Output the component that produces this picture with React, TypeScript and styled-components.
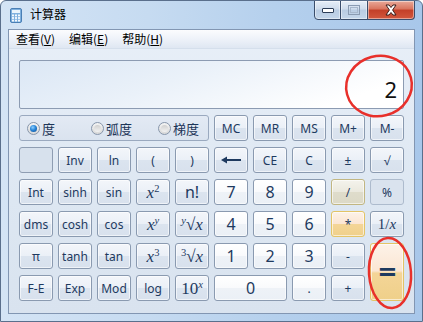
import React from "react";
import styled, { createGlobalStyle, css } from "styled-components";

const GlobalStyle = createGlobalStyle`
  html, body {
    margin: 0;
    padding: 0;
    overflow: hidden;
    background: #ffffff;
  }
  * {
    box-sizing: border-box;
  }
`;

const UI_FONT = `"Noto Sans", "Open Sans", "Noto Sans CJK SC", sans-serif`;
const CJK_FONT = `"Noto Sans CJK SC", "Noto Sans", sans-serif`;
const MATH_FONT = `"Liberation Serif", "DejaVu Serif", serif`;

type Tone = "fn" | "digit" | "divide" | "hot" | "blank" | "flat";

interface Key {
  label: React.ReactNode;
  tone?: Tone;
  wide?: boolean;
  tall?: boolean;
  big?: boolean;
}

const Window = styled.div`
  position: relative;
  width: 423px;
  height: 322px;
  display: flex;
  flex-direction: column;
  border: 1px solid #5a6f8c;
  border-radius: 6px 6px 0 0;
  background: linear-gradient(90deg, #d4e4f5 0%, #c6dbf1 35%, #b5d0ed 65%, #a8c7ea 100%);
  overflow: hidden;
`;

const TitleBar = styled.div`
  height: 28px;
  display: flex;
  align-items: flex-start;
  padding-left: 9px;
`;

const TitleIcon = styled.svg`
  margin-top: 7px;
  flex: none;
`;

const TitleText = styled.span`
  margin: 5px 0 0 8px;
  font-family: ${CJK_FONT};
  font-size: 12px;
  color: #000;
  line-height: 16px;
`;

const Spacer = styled.div`
  flex: 1;
`;

const CaptionGroup = styled.div`
  display: flex;
  margin-right: 7px;
  margin-top: -1px;
`;

const CaptionButton = styled.div<{ $close?: boolean; $first?: boolean }>`
  height: 20px;
  width: ${({ $close }) => ($close ? 47 : 27)}px;
  display: flex;
  align-items: center;
  justify-content: center;
  border: 1px solid #3a4d6b;
  border-left-width: ${({ $first }) => ($first ? 1 : 0)}px;
  border-radius: ${({ $first, $close }) =>
    $first ? "0 0 0 4px" : $close ? "0 0 4px 0" : "0"};
  box-shadow: inset 0 0 0 1px rgba(255, 255, 255, 0.45);
  background: ${({ $close }) =>
    $close
      ? "linear-gradient(#e9a999 0%, #d9735d 45%, #c33f28 50%, #d2573d 100%)"
      : "linear-gradient(#e6eef8 0%, #cfdcec 45%, #b9cce3 50%, #c4d6ea 100%)"};
`;

const Client = styled.div`
  flex: 1;
  margin: 0 7px 7px 7px;
  display: flex;
  flex-direction: column;
  border: 1px solid #8296b2;
  background: linear-gradient(#e8eff8 0%, #dde7f2 60%, #d9e3ef 100%);
`;

const MenuBar = styled.div`
  height: 19px;
  display: flex;
  align-items: center;
  padding-left: 0;
  background: linear-gradient(#fbfcfe 0%, #eef2f9 50%, #dfe7f2 100%);
  border-bottom: 1px solid #d5dfec;
`;

const MenuItem = styled.span`
  padding: 0 7px;
  font-family: ${CJK_FONT};
  font-size: 12px;
  color: #000;
  line-height: 18px;

  u {
    text-decoration: underline;
    text-underline-offset: 1px;
  }
`;

const Body = styled.div`
  padding: 11px 10px 0 10px;
  display: flex;
  flex-direction: column;
  gap: 6px;
`;

const Display = styled.div`
  height: 49px;
  border: 1px solid #8c9bb2;
  border-radius: 2px;
  background: linear-gradient(160deg, #dbe7f5 0%, #eaf1f9 40%, #ffffff 85%);
  display: flex;
  align-items: flex-end;
  justify-content: flex-end;
  padding: 0 6px 4px 0;
  font-family: ${UI_FONT};
  font-size: 22px;
  line-height: 30px;
  color: #111;
`;

const Pad = styled.div`
  display: grid;
  grid-template-columns: repeat(10, 34px);
  grid-auto-rows: 26px;
  column-gap: 5px;
  row-gap: 6px;
`;

const RadioGroup = styled.div`
  grid-column: span 5;
  display: grid;
  grid-template-columns: 64px 67px auto;
  align-items: center;
  padding-left: 7px;
  border: 1px solid #9aa9bf;
  border-radius: 3px;
  background: linear-gradient(#e3eaf4, #dae3ef);
`;

const RadioItem = styled.label`
  display: flex;
  align-items: center;
  gap: 2px;
  font-family: ${CJK_FONT};
  font-size: 13px;
  color: #1c3558;
`;

const RadioDot = styled.span<{ $on?: boolean }>`
  width: 13px;
  height: 13px;
  border-radius: 50%;
  border: 1px solid #8796ab;
  display: flex;
  align-items: center;
  justify-content: center;
  background: linear-gradient(#f4f4f4, #d8d8d8);

  &::after {
    content: "";
    width: 7px;
    height: 7px;
    border-radius: 50%;
    ${({ $on }) =>
      $on
        ? css`
            background: radial-gradient(circle at 40% 35%, #8fd0ff 0%, #2a86d8 45%, #0d4a8e 100%);
          `
        : css`
            background: linear-gradient(#d0d0d0, #f2f2f2);
          `}
  }
`;

const toneStyles: Record<Tone, ReturnType<typeof css>> = {
  fn: css`
    border-color: #8a9ab0;
    background: linear-gradient(#f3f6fa 0%, #ebf0f7 48%, #dbe4ef 52%, #d8e1ed 100%);
  `,
  digit: css`
    border-color: #8a9ab0;
    background: linear-gradient(#ffffff 0%, #f9fafc 48%, #eef2f7 52%, #ebf0f6 100%);
  `,
  divide: css`
    border-color: #c1b682;
    background: linear-gradient(#f4f3ec 0%, #ebe9de 48%, #dfdccb 52%, #dcd9c6 100%);
  `,
  hot: css`
    border-color: #e3c466;
    background: linear-gradient(#fdf2e8 0%, #fbe6d3 48%, #f4d597 52%, #efd08a 100%);
  `,
  blank: css`
    border-color: #8e9db2;
    background: #d7e1ed;
    box-shadow: none;
  `,
  flat: css`
    border-color: #adbbcd;
    background: #dae3ee;
    box-shadow: none;
  `,
};

const KeyButton = styled.div<{ $tone: Tone; $wide?: boolean; $tall?: boolean; $big?: boolean }>`
  grid-column: ${({ $wide }) => ($wide ? "span 2" : "auto")};
  grid-row: ${({ $tall }) => ($tall ? "span 2" : "auto")};
  display: flex;
  align-items: center;
  justify-content: center;
  border: 1px solid;
  border-radius: 3px;
  box-shadow: inset 0 0 0 1px rgba(255, 255, 255, 0.6);
  font-family: ${UI_FONT};
  font-size: ${({ $big }) => ($big ? 16 : 12)}px;
  color: #1e3a5f;
  white-space: nowrap;
  user-select: none;
  ${({ $tone }) => toneStyles[$tone]}
`;

const Math = styled.span<{ $size?: number }>`
  font-family: ${MATH_FONT};
  font-size: ${({ $size }) => $size ?? 17}px;
  color: #1e3a5f;
  line-height: 1;
`;

const Ital = styled.i`
  font-style: italic;
`;

const Sup = styled.sup<{ $italic?: boolean }>`
  font-size: 0.62em;
  font-style: ${({ $italic }) => ($italic ? "italic" : "normal")};
  vertical-align: 0.55em;
  line-height: 0;
`;

const EqualsSign = styled.span`
  font-family: ${UI_FONT};
  font-size: 26px;
  font-weight: 700;
  color: #1e3a5f;
  line-height: 1;
  transform: scaleX(1.2);
`;

const Annotations = styled.svg`
  position: absolute;
  left: 0;
  top: 0;
  pointer-events: none;
`;

const CalcIcon = () => (
  <TitleIcon width="12" height="15" viewBox="0 0 12 15">
    <rect x="0.5" y="0.5" width="11" height="14" rx="1.5" fill="#7fb0de" stroke="#4a7fb5" />
    <rect x="2" y="2" width="8" height="3" fill="#eaf4fc" />
    {[0, 1, 2].map((r) =>
      [0, 1, 2].map((c) => (
        <rect key={`${r}-${c}`} x={2 + c * 3} y={6.5 + r * 2.6} width="2" height="1.8" fill="#f4f9fe" />
      ))
    )}
  </TitleIcon>
);

const MinimizeGlyph = () => (
  <svg width="14" height="8" viewBox="0 0 14 8">
    <rect x="1.5" y="2.5" width="11" height="4" rx="0.5" fill="#ffffff" stroke="#2c3d57" />
  </svg>
);

const MaximizeGlyph = () => (
  <svg width="12" height="10" viewBox="0 0 12 10">
    <rect x="0.5" y="0.5" width="11" height="9" fill="none" stroke="#8a9bb2" />
    <rect x="2.5" y="2.5" width="7" height="5" fill="none" stroke="#a7b7cc" />
  </svg>
);

const CloseGlyph = () => (
  <svg width="14" height="12" viewBox="0 0 14 12">
    <path
      d="M2 1 L5 1 L7 3.5 L9 1 L12 1 L8.6 6 L12 11 L9 11 L7 8.5 L5 11 L2 11 L5.4 6 Z"
      fill="#ffffff"
      stroke="#3b1d1a"
      strokeWidth="1"
      strokeLinejoin="round"
    />
  </svg>
);

const BackArrow = () => (
  <svg width="20" height="8" viewBox="0 0 20 8">
    <path d="M0 4 L6 0.5 L6 7.5 Z" fill="#1e3a5f" />
    <rect x="5" y="3" width="15" height="2" fill="#1e3a5f" />
  </svg>
);

const x = <Ital>x</Ital>;

const keys: Key[] = [
  { label: "MC" },
  { label: "MR" },
  { label: "MS" },
  { label: "M+" },
  { label: "M-" },

  { label: "", tone: "blank" },
  { label: "Inv" },
  { label: "ln" },
  { label: "(" },
  { label: ")" },
  { label: <BackArrow /> },
  { label: "CE" },
  { label: "C" },
  { label: "±" },
  { label: "√" },

  { label: "Int" },
  { label: "sinh" },
  { label: "sin" },
  { label: <Math>{x}<Sup>2</Sup></Math> },
  { label: "n!", big: true },
  { label: "7", tone: "digit", big: true },
  { label: "8", tone: "digit", big: true },
  { label: "9", tone: "digit", big: true },
  { label: "/", tone: "divide" },
  { label: "%", tone: "flat" },

  { label: "dms" },
  { label: "cosh" },
  { label: "cos" },
  { label: <Math>{x}<Sup $italic>y</Sup></Math> },
  { label: <Math><Sup $italic>y</Sup>√{x}</Math> },
  { label: "4", tone: "digit", big: true },
  { label: "5", tone: "digit", big: true },
  { label: "6", tone: "digit", big: true },
  { label: "*", tone: "hot" },
  { label: <Math $size={15}>1/{x}</Math> },

  { label: "π" },
  { label: "tanh" },
  { label: "tan" },
  { label: <Math>{x}<Sup>3</Sup></Math> },
  { label: <Math><Sup>3</Sup>√{x}</Math> },
  { label: "1", tone: "digit", big: true },
  { label: "2", tone: "digit", big: true },
  { label: "3", tone: "digit", big: true },
  { label: "-" },
  { label: <EqualsSign>=</EqualsSign>, tone: "hot", tall: true },

  { label: "F-E" },
  { label: "Exp" },
  { label: "Mod" },
  { label: "log" },
  { label: <Math $size={17}>10<Sup $italic>x</Sup></Math> },
  { label: "0", tone: "digit", big: true, wide: true },
  { label: ".", tone: "digit" },
  { label: "+" },
];

export default function App() {
  return (
    <>
      <GlobalStyle />
      <Window>
        <TitleBar>
          <CalcIcon />
          <TitleText>计算器</TitleText>
          <Spacer />
          <CaptionGroup>
            <CaptionButton $first>
              <MinimizeGlyph />
            </CaptionButton>
            <CaptionButton>
              <MaximizeGlyph />
            </CaptionButton>
            <CaptionButton $close>
              <CloseGlyph />
            </CaptionButton>
          </CaptionGroup>
        </TitleBar>
        <Client>
          <MenuBar>
            <MenuItem>
              查看(<u>V</u>)
            </MenuItem>
            <MenuItem>
              编辑(<u>E</u>)
            </MenuItem>
            <MenuItem>
              帮助(<u>H</u>)
            </MenuItem>
          </MenuBar>
          <Body>
            <Display>2</Display>
            <Pad>
              <RadioGroup>
                <RadioItem>
                  <RadioDot $on />度
                </RadioItem>
                <RadioItem>
                  <RadioDot />弧度
                </RadioItem>
                <RadioItem>
                  <RadioDot />梯度
                </RadioItem>
              </RadioGroup>
              {keys.map((k, i) => (
                <KeyButton key={i} $tone={k.tone ?? "fn"} $wide={k.wide} $tall={k.tall} $big={k.big}>
                  {k.label}
                </KeyButton>
              ))}
            </Pad>
          </Body>
        </Client>
        <Annotations width="423" height="322" viewBox="0 0 423 322">
          <ellipse cx="378" cy="85" rx="33" ry="30" fill="none" stroke="#e8302b" strokeWidth="2.5" transform="rotate(-15 378 85)" />
          <ellipse cx="389" cy="272" rx="21" ry="35" fill="none" stroke="#e8302b" strokeWidth="2.5" transform="rotate(-4 389 272)" />
        </Annotations>
      </Window>
    </>
  );
}
